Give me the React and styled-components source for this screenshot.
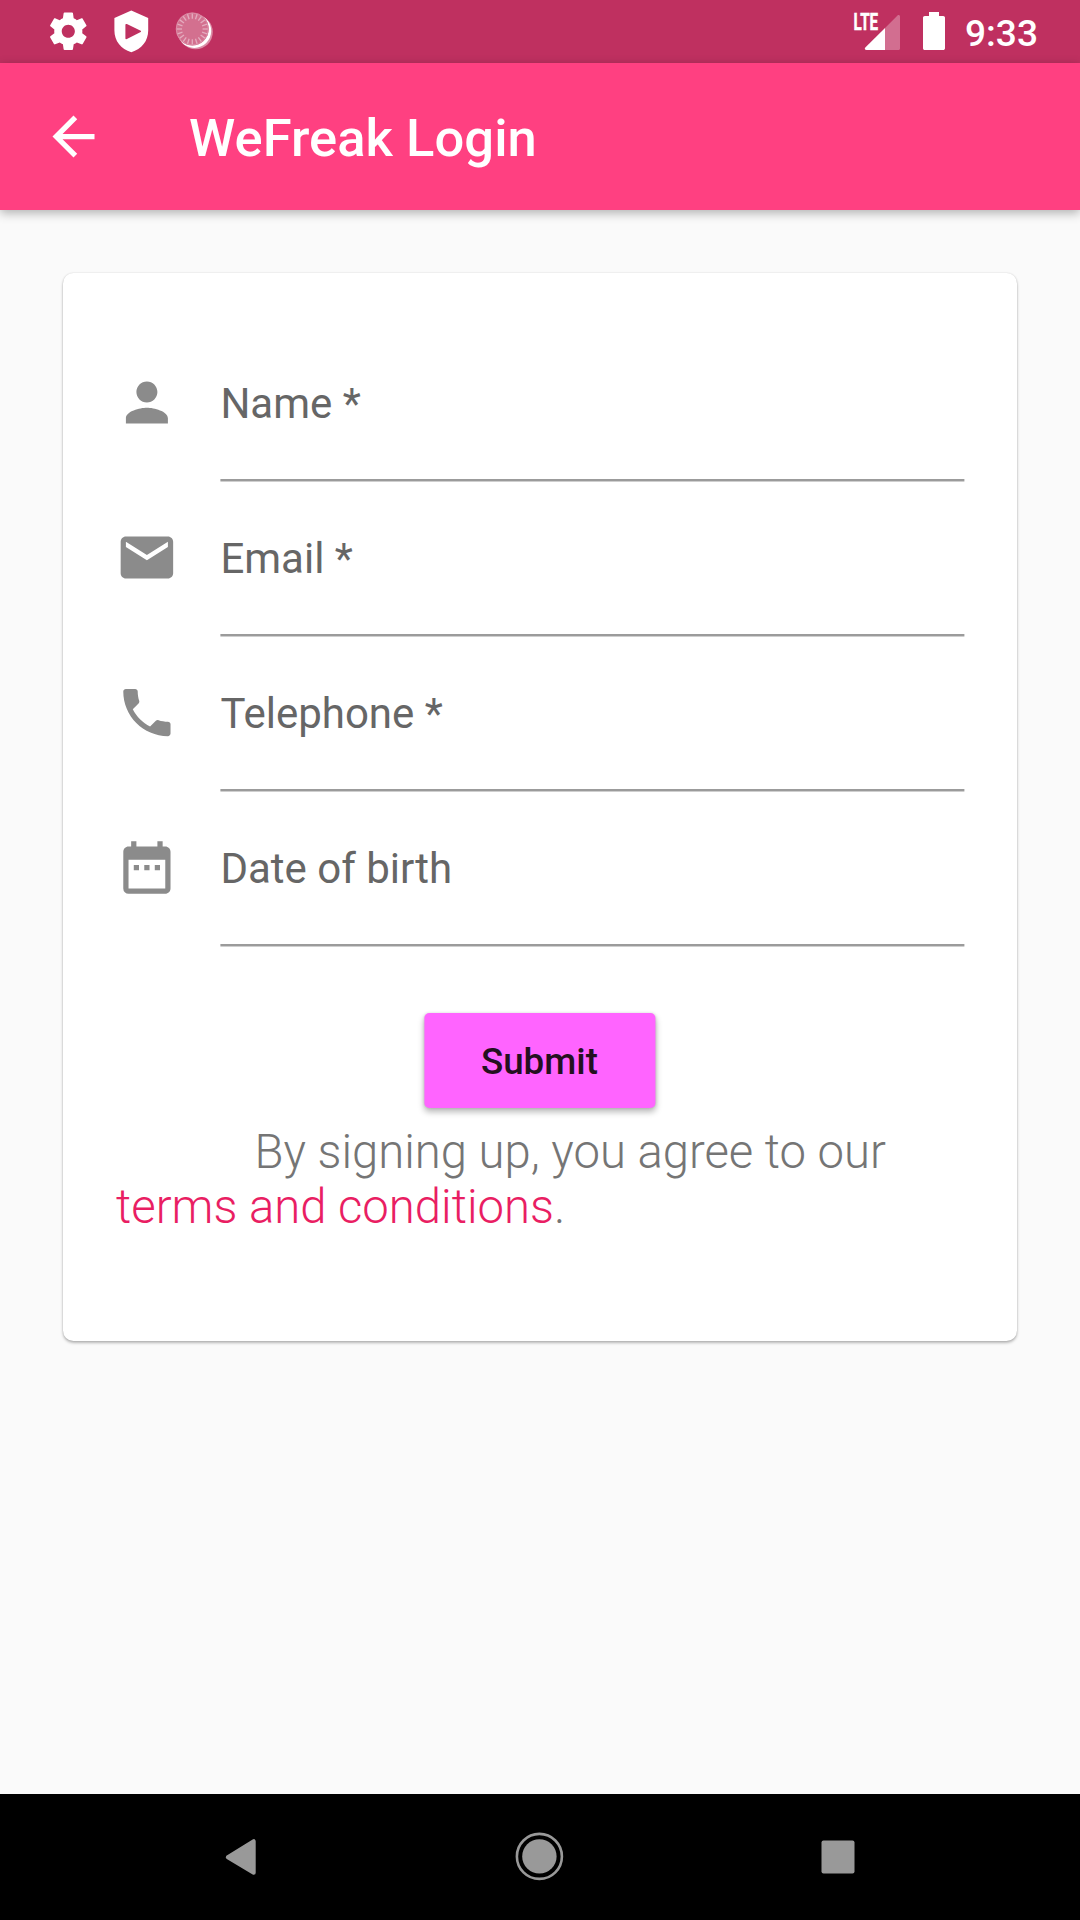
import React from "react";
import styled, { createGlobalStyle } from "styled-components";
import { MdArrowBack, MdPerson, MdEmail, MdPhone, MdDateRange } from "react-icons/md";

const GlobalStyle = createGlobalStyle`
  *, *::before, *::after { box-sizing: border-box; }
  body {
    margin: 0;
    background: #fafafa;
    font-family: Roboto, "Noto Sans", sans-serif;
  }
`;

const Screen = styled.div`
  display: flex;
  flex-direction: column;
  width: 1080px;
  height: 1920px;
  overflow: hidden;
  background: #fafafa;
`;

const StatusBar = styled.div`
  display: flex;
  flex: none;
  align-items: center;
  justify-content: space-between;
  height: 63px;
  padding: 0 42px;
  background: #bf3060;
  color: #fff;
`;

const StatusGroup = styled.div`
  display: flex;
  align-items: center;
  height: 63px;
`;

const StatusIcon = styled.svg`
  display: block;
  flex: none;
  width: ${(p) => p.$width}px;
  height: 63px;
`;

const NetworkLabel = styled.text`
  font: 700 23px Roboto, sans-serif;
  fill: #fff;
  stroke: #fff;
  stroke-width: 0.5px;
`;

const Clock = styled.time`
  margin-left: 19.4px;
  padding-top: 4px;
  font-size: 37.1px;
  font-weight: 500;
  line-height: 44px;
`;

const Toolbar = styled.header`
  display: flex;
  flex: none;
  align-items: center;
  z-index: 1;
  height: 147px;
  padding-left: 42px;
  background: #ff4081;
  color: #fff;
  box-shadow: 0 3px 10px rgba(0, 0, 0, 0.3);
`;

const BackButton = styled.button`
  display: flex;
  margin: 0 84px 0 0;
  padding: 0;
  border: 0;
  background: none;
  color: inherit;
  font-size: 63px;
`;

const Title = styled.h1`
  margin: 3px 0 0;
  font-size: 52.5px;
  font-weight: 500;
  line-height: 62px;
  letter-spacing: 0.05px;
`;

const Content = styled.main`
  flex: 1;
  padding: 63px;
`;

const Card = styled.form`
  display: flex;
  flex-direction: column;
  height: 1068px;
  padding: 98px 53px 0 52px;
  border-radius: 10.5px;
  background: #fff;
  box-shadow: 0 2px 3px rgba(0, 0, 0, 0.27), 0 0 2px rgba(0, 0, 0, 0.14);
`;

const Field = styled.label`
  display: flex;
  gap: 42px;
  height: 155px;
  color: #8b8b8b;
  transform: translateX(0.4px);

  svg {
    flex: none;
    width: 63px;
    height: 63px;
  }
`;

const FieldLine = styled.span`
  flex: 1;
  height: 111px;
  padding-top: 8px;
  background: linear-gradient(#9b9b9b 66%, #cfcfcf 67%) bottom / 100% 3px no-repeat;
  color: #666;
  font-size: 42px;
  line-height: 49px;
`;

const SubmitButton = styled.button`
  align-self: center;
  width: 231px;
  height: 94.5px;
  margin-top: 22px;
  padding: 2px 1px 0 0;
  border: 0;
  border-radius: 5px;
  background: #ff64ff;
  color: #24101f;
  font-family: inherit;
  font-size: 36.75px;
  font-weight: 500;
  line-height: 43px;
  box-shadow: 0 4px 6px rgba(0, 0, 0, 0.28), 0 0 3px rgba(0, 0, 0, 0.12);
  transform: translateX(0.4px);
`;

const Terms = styled.p`
  margin: 17px 0 0 1px;
  color: #757575;
  font-size: 47.25px;
  font-weight: 300;
  line-height: 55.4px;
  text-indent: 138.5px;
`;

const TermsLink = styled.a`
  color: #e91e63;
`;

const NavBar = styled.nav`
  display: flex;
  flex: none;
  align-items: center;
  justify-content: center;
  gap: 215px;
  height: 126px;
  background: #000;
`;

const NavIcon = styled.svg`
  display: block;
  width: 84px;
  height: 126px;
  fill: #999;
  stroke: #999;
`;

const fields = [
  { label: "Name *", Icon: MdPerson },
  { label: "Email *", Icon: MdEmail },
  { label: "Telephone *", Icon: MdPhone },
  { label: "Date of birth", Icon: MdDateRange },
];

const ticks = Array.from({ length: 20 }, (_, i) => i * 18);

function GearIcon() {
  return (
    <StatusIcon $width={52} viewBox="0 0 52 63">
      <path
        transform="translate(3.8 8.8) scale(1.875)"
        fill="#fff"
        d="M19.43 12.98c.04-.32.07-.64.07-.98s-.03-.66-.07-.98l2.11-1.65c.19-.15.24-.42.12-.64l-2-3.46c-.12-.22-.39-.3-.61-.22l-2.49 1c-.52-.4-1.08-.73-1.69-.98l-.38-2.65C14.46 2.18 14.25 2 14 2h-4c-.25 0-.46.18-.49.42l-.38 2.65c-.61.25-1.17.59-1.69.98l-2.49-1c-.23-.09-.49 0-.61.22l-2 3.46c-.13.22-.07.49.12.64l2.11 1.65c-.04.32-.07.65-.07.98s.03.66.07.98l-2.11 1.65c-.19.15-.24.42-.12.64l2 3.46c.12.22.39.3.61.22l2.49-1c.52.4 1.08.73 1.69.98l.38 2.65c.03.24.24.42.49.42h4c.25 0 .46-.18.49-.42l.38-2.65c.61-.25 1.17-.59 1.69-.98l2.49 1c.23.09.49 0 .61-.22l2-3.46c.12-.22.07-.49-.12-.64l-2.11-1.65zM12 15.5c-1.93 0-3.5-1.57-3.5-3.5s1.57-3.5 3.5-3.5 3.5 1.57 3.5 3.5-1.57 3.5-3.5 3.5z"
      />
    </StatusIcon>
  );
}

function ShieldIcon() {
  return (
    <StatusIcon $width={74} viewBox="0 0 74 63">
      <path
        fill="#fff"
        fillRule="evenodd"
        d="M37.3 10.6L54.2 18v12.5c0 10.5-6.5 18.5-16.9 21.7C26.9 49 20.4 41 20.4 30.5V18zM32.2 24c-.5 0-.8.3-.8.8v13.4c0 .8.8 1.3 1.5.9l13.8-7.1c.5-.3.5-1 0-1.3l-13.3-6.5c-.4-.2-.8-.2-1.2-.2z"
      />
    </StatusIcon>
  );
}

function SpinnerIcon() {
  return (
    <StatusIcon $width={52} viewBox="0 0 52 63">
      <circle cx="27.6" cy="32.1" r="17.2" fill="#fff" opacity=".45" />
      <circle cx="26.3" cy="31" r="16.9" fill="#fff" />
      <circle cx="24.3" cy="29" r="16.5" fill="#d3708f" />
      <circle cx="24.3" cy="29" r="16" fill="none" stroke="#db8ba5" strokeWidth="1" />
      {ticks.map((angle) => (
        <path
          key={angle}
          d="M24.3 13.5v5.2"
          stroke="#e4acbf"
          strokeWidth="1.3"
          transform={`rotate(${angle} 24.3 29)`}
        />
      ))}
    </StatusIcon>
  );
}

function SignalIcon() {
  return (
    <StatusIcon $width={52} viewBox="0 0 52 63">
      <path fill="#fff" opacity=".3" d="M37 28L49.5 15.5c.9-.9 2.5-.3 2.5 1V48.5c0 .9-.6 1.5-1.5 1.5H37z" />
      <path fill="#fff" d="M37 28v22H18.5c-1.6 0-2.2-1.6-1.2-2.6z" />
      <NetworkLabel x="5.6" y="29.7" textLength="24.5" lengthAdjust="spacingAndGlyphs">
        LTE
      </NetworkLabel>
    </StatusIcon>
  );
}

function BatteryIcon() {
  return (
    <StatusIcon $width={46} viewBox="0 0 46 63">
      <path
        fill="#fff"
        d="M29 12h10v4h4.2c1 0 1.8.8 1.8 1.8v30.4c0 1-.8 1.8-1.8 1.8H24.8c-1 0-1.8-.8-1.8-1.8V17.8c0-1 .8-1.8 1.8-1.8H29z"
      />
    </StatusIcon>
  );
}

export default function App() {
  return (
    <>
      <GlobalStyle />
      <Screen>
        <StatusBar>
          <StatusGroup>
            <GearIcon />
            <ShieldIcon />
            <SpinnerIcon />
          </StatusGroup>
          <StatusGroup>
            <SignalIcon />
            <BatteryIcon />
            <Clock>9:33</Clock>
          </StatusGroup>
        </StatusBar>
        <Toolbar>
          <BackButton type="button" aria-label="Back">
            <MdArrowBack />
          </BackButton>
          <Title>WeFreak Login</Title>
        </Toolbar>
        <Content>
          <Card>
            {fields.map(({ label, Icon }) => (
              <Field key={label}>
                <Icon />
                <FieldLine>{label}</FieldLine>
              </Field>
            ))}
            <SubmitButton type="button">Submit</SubmitButton>
            <Terms>
              By signing up, you agree to our <TermsLink>terms and conditions</TermsLink>.
            </Terms>
          </Card>
        </Content>
        <NavBar>
          <NavIcon viewBox="0 0 84 126">
            <path strokeWidth="4" strokeLinejoin="round" d="M28.8 63.2L54.7 47.2v31.6z" />
          </NavIcon>
          <NavIcon viewBox="0 0 84 126">
            <circle cx="41.4" cy="62.4" r="22.5" fill="none" strokeWidth="2.6" />
            <circle cx="41.4" cy="62.4" r="17.2" stroke="none" />
          </NavIcon>
          <NavIcon viewBox="0 0 84 126">
            <rect x="24.5" y="46.5" width="33" height="33" rx="2" stroke="none" />
          </NavIcon>
        </NavBar>
      </Screen>
    </>
  );
}
